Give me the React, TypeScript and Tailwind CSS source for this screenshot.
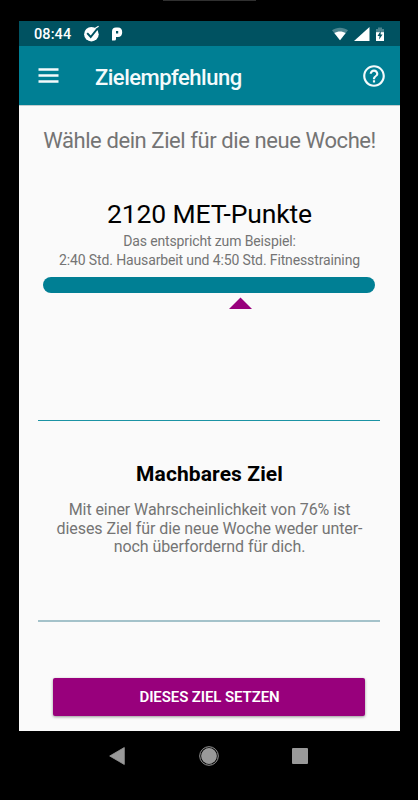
import React from 'react';

interface DividerProps {
  className?: string;
}

function StatusBar() {
  return (
    <div className="flex h-[25px] items-center bg-[#005261] pl-[15px] pr-4 text-white">
      <span className="w-[50px] whitespace-nowrap pt-[2px] text-[14.5px] font-medium leading-[18px] tracking-[0.1px]">08:44</span>
      <svg className="-mt-px h-[17px] w-[17px]" viewBox="0 0 17 17">
        <circle cx="7.4" cy="9.2" r="7.3" fill="#fff" />
        <path d="M3.2 8.2 6.7 12 14 2.8" fill="none" stroke="#005261" strokeWidth="1.9" />
        <path d="M11 3.4 14.6 1.2" stroke="#fff" strokeWidth="1.2" />
      </svg>
      <svg className="ml-[9px] h-[15px] w-[13px]" viewBox="0 0 13 15">
        <path d="M2 14.5V5.5Q2 1.5 6 1.5H8Q12.200 1.500 12.200 6.200T8 11H6V13Q6 14.500 4.500 14.500ZM6 5v2.600h2.200V5Z" fill="#fff" fillRule="evenodd" />
      </svg>
      <div className="flex-1" />
      <svg className="h-[16px] w-[16px]" viewBox="0 0 16 16">
        <path d="M0 4.3C4.5.9 11.5.9 16 4.3L8 14.3Z" fill="#4d8590" />
        <path d="M2.300 7.100c3.300-2.300 8.100-2.300 11.400 0L8 14.300Z" fill="#fff" />
      </svg>
      <svg className="ml-[6px] h-[16px] w-[16px]" viewBox="0 0 16 16">
        <path d="M0 15 15.500 1V15Z" fill="#fff" />
      </svg>
      <svg className="ml-[6px] h-[16px] w-[8px]" viewBox="0 0 8 16">
        <path d="M0 3h2V1.4h4V3h2v4H0Z" fill="#4d8590" />
        <path d="M0 6.2h8V15H0Z" fill="#fff" />
        <path d="M4.8 4.8 1.5 10h2l-.4 3.4L6.6 8.5h-2Z" fill="#005261" />
      </svg>
    </div>
  )
}

function AppBar() {
  return (
    <header className="flex h-[59px] items-center bg-[#007f94] pl-[19px] pr-[13px] text-[#f4fafb]">
      <svg className="-mt-px h-[16px] w-[21px]" viewBox="0 0 21 16">
        <path d="M.5 2.5h20M.5 8.500h20M.5 14.500h20" stroke="currentColor" strokeWidth="2.3" />
      </svg>
      <h1 className="ml-[36px] flex-1 whitespace-nowrap pt-[4px] text-[22px] font-medium leading-7 tracking-[-0.5px]">Zielempfehlung</h1>
      <svg className="h-[26px] w-[26px]" viewBox="0 0 24 24" fill="currentColor">
        <path d="M11 18h2v-2h-2v2zm1-16C6.48 2 2 6.48 2 12s4.48 10 10 10 10-4.48 10-10S17.52 2 12 2zm0 18c-4.41 0-8-3.59-8-8s3.59-8 8-8 8 3.59 8 8-3.59 8-8 8zm0-14c-2.21 0-4 1.79-4 4h2c0-1.1.9-2 2-2s2 .9 2 2c0 2-3 1.75-3 5h2c0-2.25 3-2.5 3-5 0-2.21-1.79-4-4-4z" />
      </svg>
    </header>
  )
}

function Divider({ className }: DividerProps) {
  return <div className={`ml-[19px] w-[342px] ${className}`} />
}

function NavigationBar() {
  return (
    <nav className="flex h-[50px] items-center pl-[90px] text-[#999999]">
      <svg className="h-[20px] w-[16px]" viewBox="0 0 16 20">
        <path d="M15.3 1.5v17L.7 10Z" fill="currentColor" stroke="currentColor" strokeWidth=".8" strokeLinejoin="round" />
      </svg>
      <svg className="ml-[74px] h-[20px] w-[20px]" viewBox="0 0 20 20">
        <circle cx="10" cy="10" r="9.3" fill="none" stroke="currentColor" strokeWidth="1" />
        <circle cx="10" cy="10" r="7.9" fill="currentColor" />
      </svg>
      <div className="ml-[73px] h-4 w-4 rounded-[1px] bg-[#999999]" />
    </nav>
  )
}

export default function App() {
  return (
    <div className="h-[800px] w-[418px] overflow-hidden bg-black font-['Roboto',sans-serif]">
      <div className="mx-auto h-px w-[93px] bg-[#303030]" />
      <div className="ml-[19px] mt-[20px] w-[381px]">
        <StatusBar />
        <AppBar />
        <main className="flex h-[626px] flex-col border-t border-[#c4cdcf] bg-[#fafafa] text-center text-[#747474]">
          <h2 className="mt-[21px] whitespace-nowrap text-[22px] leading-7 tracking-[-0.41px]">Wähle dein Ziel für die neue Woche!</h2>
          <p className="mt-[43px] whitespace-nowrap text-[26.5px] leading-8 tracking-[-0.12px] text-black">2120 MET-Punkte</p>
          <div className="mt-[2px] whitespace-nowrap text-[14px] leading-[19px] tracking-[-0.13px]">
            <p>Das entspricht zum Beispiel:</p>
            <p>2:40 Std. Hausarbeit und 4:50 Std. Fitnesstraining</p>
          </div>
          <div className="ml-[24px] mt-[7px] h-4 w-[332px] rounded-full bg-[#007f94]" />
          <svg className="ml-[210px] mt-[4px] h-[12px] w-[23px]" viewBox="0 0 23 12">
            <path d="M11.5.5 23 12H0Z" fill="#98007c" />
          </svg>
          <Divider className="mt-[111px] h-px bg-[#1b93a4]" />
          <h3 className="mt-[39px] whitespace-nowrap text-[21px] font-bold leading-7 tracking-[0.1px] text-black">Machbares Ziel</h3>
          <p className="mt-[13px] whitespace-nowrap text-[16px] leading-[18.6px] tracking-[-0.08px]">
            Mit einer Wahrscheinlichkeit von 76% ist<br />
            dieses Ziel für die neue Woche weder unter-<br />
            noch überfordernd für dich.
          </p>
          <Divider className="mt-[63px] h-[2px] bg-[#a4c2ca]" />
          <button className="ml-[34px] mt-[56px] h-[38px] w-[312px] whitespace-nowrap rounded-[2px] bg-[#98007c] pl-px pt-px text-[15px] font-semibold tracking-[-0.1px] text-white shadow-[0_1px_3px_rgba(0,0,0,0.4)]">
            DIESES ZIEL SETZEN
          </button>
        </main>
        <NavigationBar />
      </div>
    </div>
  )
}
